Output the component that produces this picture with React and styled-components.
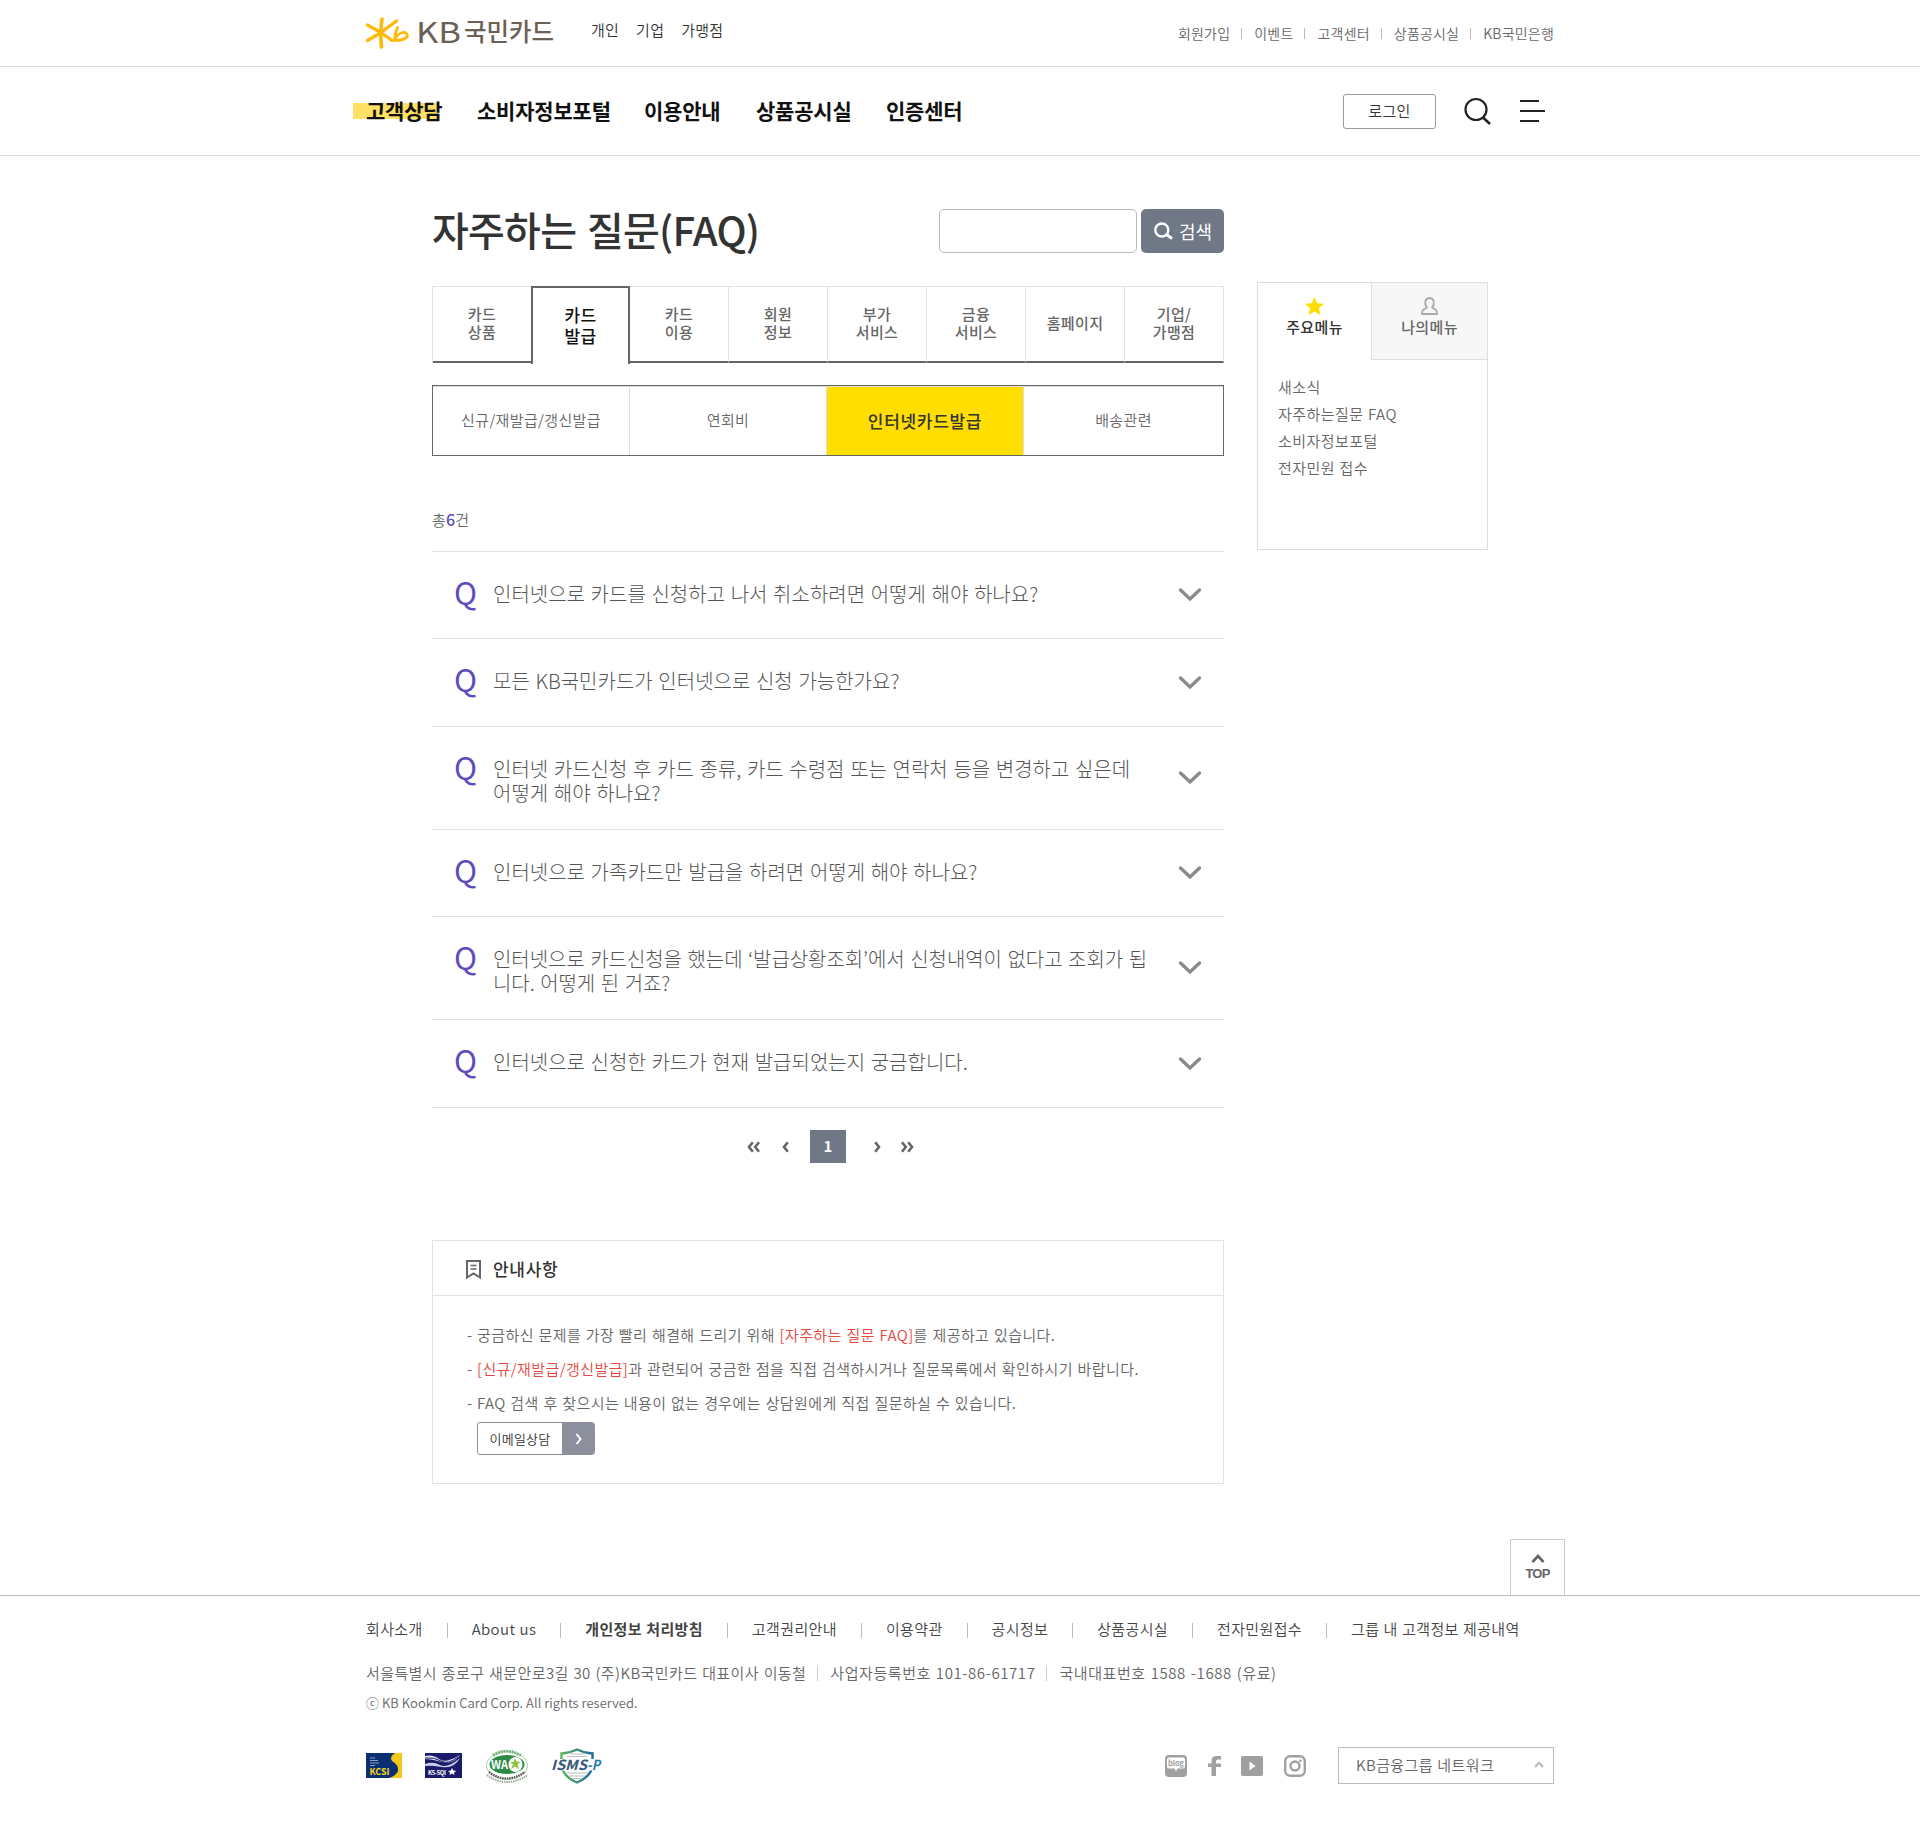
import React from "react";
import styled, { createGlobalStyle, css } from "styled-components";

const Global = createGlobalStyle`
  *, *::before, *::after { box-sizing: border-box; }
  body {
    margin: 0;
    background: #fff;
    color: #666;
    font-family: "Noto Sans CJK KR", "Noto Sans", sans-serif;
    font-size: 15px;
    font-weight: 350;
    line-height: 20px;
  }
  ul, h1, h2, p { margin: 0; padding: 0; list-style: none; font-weight: inherit; }
  a { color: inherit; text-decoration: none; white-space: nowrap; }
  button, input { font: inherit; color: inherit; }
  svg { display: block; flex: none; overflow: visible; }
`;

const Page = styled.div`
  height: 1828px;
  overflow: hidden;
`;

const Container = styled.div`
  width: 1188px;
  margin: 0 auto;
  display: flex;
  align-items: center;
`;

/* ---------- header ---------- */
const TopBar = styled.div`
  height: 67px;
  border-bottom: 1px solid #ddd;
`;
const TopInner = styled(Container)`
  height: 66px;
`;
const SiteLinks = styled.nav`
  display: flex;
  gap: 17px;
  margin: 0 auto 7px 37px;
  color: #333;
  letter-spacing: 0.25px;
`;
const UtilLinks = styled.ul`
  display: flex;
  align-items: center;
  font-size: 14px;
  letter-spacing: 0.2px;
`;
const UtilItem = styled.li`
  display: flex;
  align-items: center;
  &:not(:first-child)::before {
    content: "";
    width: 1px;
    height: 11px;
    margin: 0 12px 0 11px;
    background: #bbb;
  }
`;
const NavBar = styled.div`
  height: 89px;
  border-bottom: 1px solid #ddd;
`;
const NavInner = styled(Container)`
  height: 88px;
`;
const MainNav = styled.nav`
  display: flex;
  gap: 35px;
  margin: 0 auto 2px 0;
  font-size: 21px;
  font-weight: 700;
  line-height: 30px;
  color: #111;
`;
const NavLink = styled.a`
  display: block;
  width: ${(p) => p.$w}px;
  letter-spacing: -0.2px;
  ${(p) =>
    p.$on &&
    css`
      margin-left: -13px;
      padding-left: 13px;
      background: linear-gradient(#ffe066, #ffe066) 0 8px / 85px 16px no-repeat;
    `}
`;
const Login = styled.button`
  width: 93px;
  height: 35px;
  margin-right: 28px;
  padding: 0 0 1px;
  border: 1px solid #999;
  border-radius: 3px;
  background: #fff;
  color: #333;
  letter-spacing: 0.3px;
`;
const MenuIcon = styled.svg`
  margin: 0 9px 0 28px;
`;

/* ---------- content ---------- */
const Main = styled.main`
  width: 1056px;
  height: 1439px;
  margin: 0 auto;
  padding-top: 53px;
  display: flex;
  align-items: flex-start;
  gap: 33px;
`;
const Content = styled.section`
  width: 792px;
`;
const TitleRow = styled.div`
  height: 44px;
  display: flex;
  align-items: center;
`;
const Title = styled.h1`
  margin: 0 auto 5px 0;
  font-size: 40px;
  font-weight: 500;
  line-height: 44px;
  letter-spacing: -0.75px;
  word-spacing: 2.5px;
  color: #333;
`;
const SearchInput = styled.input`
  width: 198px;
  height: 44px;
  margin-right: 4px;
  border: 1px solid #bbb;
  border-radius: 5px;
`;
const SearchButton = styled.button`
  width: 83px;
  height: 44px;
  padding: 0 0 1px 13px;
  display: flex;
  align-items: center;
  gap: 6px;
  border: 0;
  border-radius: 5px;
  background: #707785;
  color: #fff;
  font-size: 18px;
  font-weight: 400;
`;
const Tabs = styled.ul`
  display: flex;
  height: 77px;
  margin-top: 33px;
  border-left: 1px solid #e2e2e2;
`;
const Tab = styled.li`
  flex: 0 0 99px;
  height: 77px;
  display: flex;
  align-items: center;
  justify-content: center;
  padding-bottom: 3px;
  border: solid #e2e2e2;
  border-width: 1px 1px 2px 0;
  border-bottom-color: #666;
  text-align: center;
  white-space: pre-line;
  font-weight: 500;
  line-height: 18px;
  letter-spacing: 0.35px;
  ${(p) =>
    p.$on &&
    css`
      height: 78px;
      margin-left: -1px;
      border: 2px solid #666;
      border-bottom: 0;
      color: #111;
      font-size: 17px;
      line-height: 21px;
    `}
`;
const SubTabs = styled.ul`
  display: flex;
  height: 71px;
  margin-top: 22px;
  border: 1px solid #666;
`;
const SubTab = styled.li`
  width: 197px;
  border-right: 1px solid #ddd;
  border-top: 1px solid #ddd;
  line-height: 65px;
  text-align: center;
  letter-spacing: 0.35px;
  &:last-child {
    flex: 1;
    border-right: 0;
  }
  ${(p) =>
    p.$on &&
    css`
      background: #ffde00;
      color: #333;
      font-size: 17px;
      font-weight: 500;
      line-height: 67px;
      letter-spacing: 0.7px;
    `}
`;
const Count = styled.p`
  margin: 53px 0 21px;
  letter-spacing: 0.2px;
  b {
    color: #5e4bbd;
    font-weight: 500;
    font-size: 16px;
  }
`;
const FaqList = styled.ul`
  border-top: 1px solid #e2e2e2;
`;
const FaqItem = styled.li`
  height: ${(p) => p.$h}px;
  padding: 0 22px;
  display: flex;
  align-items: center;
  border-bottom: 1px solid #e2e2e2;
`;
const Mark = styled.span`
  align-self: flex-start;
  width: 39px;
  padding-top: 25px;
  font-size: 31px;
  font-weight: 400;
  line-height: 30px;
  color: #5e4bbd;
`;
const Question = styled.p`
  align-self: flex-start;
  margin-right: auto;
  padding-top: 30px;
  font-size: 20px;
  font-weight: 300;
  line-height: 24px;
  letter-spacing: ${(p) => p.$ls || 0}px;
  word-spacing: 1.2px;
  white-space: pre;
  color: #555;
`;
const Paging = styled.nav`
  height: 33px;
  margin-top: 22px;
  padding-left: 315px;
  display: flex;
  align-items: center;
`;
const Current = styled.b`
  width: 36px;
  height: 33px;
  margin: 0 28px 0 21px;
  background: #707785;
  color: #fff;
  font-weight: 700;
  line-height: 32px;
  text-align: center;
`;
const Gap = styled.span`
  width: ${(p) => p.$w}px;
`;
const Notice = styled.section`
  height: 244px;
  margin-top: 77px;
  border: 1px solid #e2e2e2;
`;
const NoticeTitle = styled.h2`
  height: 55px;
  padding: 2px 0 0 33px;
  display: flex;
  align-items: center;
  gap: 12px;
  border-bottom: 1px solid #e2e2e2;
  font-size: 17px;
  font-weight: 500;
  color: #333;
  letter-spacing: 0.7px;
`;
const NoticeList = styled.ul`
  padding: 22px 0 0 34px;
  line-height: 34px;
`;
const NoticeItem = styled.li`
  display: flex;
  white-space: pre;
  letter-spacing: 0.41px;
  word-spacing: 0.9px;
  &::before {
    content: "-";
    width: 10px;
  }
  em {
    color: #e8483e;
    font-style: normal;
  }
`;
const MailButton = styled.button`
  width: 118px;
  height: 33px;
  margin: 2px 0 0 44px;
  padding: 0;
  display: flex;
  align-items: stretch;
  overflow: hidden;
  border: 1px solid #8b909c;
  border-radius: 3px;
  background: #fff;
  color: #333;
  font-size: 13px;
  line-height: 32px;
  letter-spacing: 0.2px;
`;
const MailLabel = styled.span`
  width: 84px;
  text-align: center;
`;
const MailArrow = styled.span`
  flex: 1;
  display: flex;
  align-items: center;
  justify-content: center;
  background: #8b909c;
`;

/* ---------- quick menu ---------- */
const Aside = styled.aside`
  width: 231px;
  height: 268px;
  margin-top: 73px;
  border: 1px solid #ddd;
`;
const AsideTabs = styled.div`
  display: flex;
`;
const AsideTab = styled.div`
  flex: 1;
  height: 77px;
  padding-top: 14px;
  display: flex;
  flex-direction: column;
  align-items: center;
  gap: 2px;
  font-weight: 500;
  letter-spacing: 0.35px;
  color: ${(p) => (p.$on ? "#333" : "#666")};
  ${(p) =>
    !p.$on &&
    css`
      flex: 0 0 116px;
      border: solid #ddd;
      border-width: 0 0 1px 1px;
      background: #f7f7f7;
    `}
`;
const AsideList = styled.ul`
  padding: 13px 20px;
  line-height: 27px;
  letter-spacing: 0.45px;
  word-spacing: 0.8px;
`;

/* ---------- footer ---------- */
const TopLinkRow = styled.div`
  position: relative;
  width: 1210px;
  margin: 0 auto;
`;
const TopLink = styled.a`
  position: absolute;
  right: 0;
  bottom: 0;
  width: 55px;
  height: 56px;
  padding-top: 14px;
  display: flex;
  flex-direction: column;
  align-items: center;
  gap: 1px;
  border: 1px solid #ccc;
  border-bottom: 0;
  font-family: "Liberation Sans", Arial, sans-serif;
  font-size: 13px;
  font-weight: 700;
  line-height: 19px;
  letter-spacing: -0.8px;
`;
const Footer = styled.footer`
  border-top: 1px solid #bbb;
  padding-top: 22px;
`;
const FooterNav = styled(Container)`
  height: 22px;
  color: #444;
  letter-spacing: 0.36px;
  word-spacing: 0.6px;
`;
const FooterLink = styled.a`
  display: flex;
  align-items: center;
  font-weight: ${(p) => (p.$bold ? 700 : 350)};
  &:not(:first-child)::before {
    content: "";
    width: 1px;
    height: 15px;
    margin: 2px 24px 0 24px;
    background: #bbb;
  }
`;
const Address = styled(Container)`
  height: 20px;
  margin-top: 23px;
  letter-spacing: 0.4px;
  word-spacing: 1px;
  span + span {
    display: flex;
    align-items: center;
    letter-spacing: 0.58px;
  }
  span + span::before {
    content: "";
    width: 1px;
    height: 15px;
    margin: 1px 12px 0 11px;
    background: #ccc;
  }
`;
const Copyright = styled(Container)`
  height: 20px;
  margin-top: 10px;
  font-size: 13px;
  letter-spacing: 0.04px;
`;
const FooterBottom = styled(Container)`
  height: 37px;
  margin-top: 34px;
`;
const Badges = styled.div`
  display: flex;
  align-items: center;
  margin-right: auto;
`;
const Social = styled.div`
  display: flex;
  align-items: center;
`;
const Network = styled.button`
  width: 216px;
  height: 37px;
  margin-left: 32px;
  padding: 0 9px 2px 17px;
  display: flex;
  align-items: center;
  justify-content: space-between;
  border: 1px solid #bbb;
  background: #fff;
  letter-spacing: 0.4px;
  word-spacing: 0.6px;
`;

/* ---------- drawings ---------- */
const Logo = () => (
  <svg width="188" height="36" viewBox="366 16 188 36">
    <g fill="none" stroke="#ffb90b" strokeLinecap="round" strokeLinejoin="round">
      <path d="M382 20 Q380 33 381.500 48" strokeWidth="3.600" />
      <path d="M367.500 26 L381 33.500 L392 41.500" strokeWidth="3.200" />
      <path d="M367.500 41.500 L381 33.500 Q389 27.500 396.500 22" strokeWidth="3.400" />
      <path d="M397.500 28.500 Q394.500 35.500 394.500 41.500 Q404 41.500 407.300 37.500 Q408 33 402.500 33.500 Q397 35 394.500 41" strokeWidth="2.800" />
    </g>
    <g fill="#6c6054" fontFamily="'Noto Sans CJK KR', sans-serif">
      <text x="416" y="43.500" fontSize="29" fontWeight="400" textLength="45" lengthAdjust="spacingAndGlyphs">KB</text>
      <text x="464" y="42" fontSize="25" fontWeight="500" textLength="90" lengthAdjust="spacingAndGlyphs">국민카드</text>
    </g>
  </svg>
);

const Chevron = () => (
  <svg width="24" height="14" viewBox="0 0 24 14">
    <path d="M2.500 2l9.500 9L21.500 2" fill="none" stroke="#8a8a8e" strokeWidth="3.400" strokeLinecap="round" />
  </svg>
);

const Arrows = ({ double, right }) => (
  <svg width={double ? 13 : 7} height="12" viewBox={double ? "0 0 13 12" : "0 0 7 12"}>
    <g
      fill="none"
      stroke="#666"
      strokeWidth="2.600"
      transform={right ? `translate(${double ? 13 : 7} 0) scale(-1 1)` : undefined}
    >
      <path d="M5.800 1.300L2 6l3.800 4.700" />
      {double && <path d="M12 1.300L8.200 6l3.800 4.700" />}
    </g>
  </svg>
);

const BadgeSvg = styled.svg`
  margin-left: ${(p) => p.$ml || 0}px;
`;

const Kcsi = () => (
  <BadgeSvg width="36" height="25" viewBox="0 0 36 25">
    <rect width="36" height="25" fill="#0b2f73" />
    <path d="M36 0H29Q23 4 26 8q7 4 6 10-2 5-9 7h13z" fill="#f4c81a" />
    <path d="M4 5h5M4 7.500h8M4 10h9M4 12.500h5" stroke="#8d9fc0" strokeWidth="1" />
    <text x="3.500" y="21.500" fontSize="9" fontWeight="700" fill="#f4d51a" textLength="20">KCSI</text>
  </BadgeSvg>
);
const Kssqi = () => (
  <BadgeSvg $ml={23} width="37" height="25" viewBox="0 0 37 25">
    <rect width="37" height="25" fill="#1b1b6b" />
    <path d="M0 3Q8 1 14 6T35 2Q28 12 17 9T0 6z" fill="#dfe3f2" />
    <path d="M0 11Q8 8 15 12T35 5Q29 16 17 14T0 13z" fill="#c9cfe8" />
    <path d="M0 5Q9 4 16 8T33 4" stroke="#1b1b6b" fill="none" />
    <path d="M27 15l1.300 2.500 3.200.5-2.500 1.400.5 2.600-2.500-1.500-2.500 1.500.5-2.600-2-1.400 2.800-.5z" fill="#fff" />
    <text x="3" y="21.500" fontSize="6" fontWeight="700" fill="#fff" textLength="18">KS-SQI</text>
  </BadgeSvg>
);
const WebAccess = () => (
  <BadgeSvg $ml={22} width="46" height="36" viewBox="0 0 46 36">
    <ellipse cx="23" cy="17.500" rx="20.500" ry="14" fill="#fff" stroke="#a9d0a5" strokeWidth="1" />
    <path d="M9 7.500Q22-1 37 7.500" fill="none" stroke="#76b57c" strokeWidth="3" strokeDasharray="2 .8" />
    <ellipse cx="23" cy="16.500" rx="17.500" ry="9.500" fill="#2b8d45" />
    <ellipse cx="31.500" cy="16.500" rx="7" ry="7.500" fill="#fff" />
    <path d="M31 10.500l1.500 2.800 4 1-3 2 1.500 5-4-3-4 3 2-5-3-1.500 3.500-1z" fill="#8cc63f" />
    <text x="7" y="21" fontSize="12" fontWeight="700" fill="#fff" textLength="17" lengthAdjust="spacingAndGlyphs">WA</text>
    <path d="M5 24Q22 37 41 24" fill="none" stroke="#555" strokeWidth="2.200" strokeDasharray="1.600 .8" />
    <path d="M3 27Q22 41 44 27" fill="none" stroke="#9aa59a" strokeWidth="1.800" strokeDasharray="1.500 .8" />
  </BadgeSvg>
);
const Isms = () => (
  <BadgeSvg $ml={22} width="50" height="36" viewBox="0 0 50 36">
    <defs>
      <linearGradient id="shield">
        <stop offset="0" stopColor="#5db45b" />
        <stop offset="1" stopColor="#1c6a9c" />
      </linearGradient>
    </defs>
    <path d="M25 1.500Q18 5 9.500 5.500V17Q10 28 25 34.500Q40 28 40.500 17V5.500Q32 5 25 1.500z" fill="#fff" stroke="url(#shield)" strokeWidth="2.400" />
    <path d="M15 8.500h20M18 6h14M14 25h22M17 28h16M21 30.500h8" stroke="#b9bfc2" strokeWidth="1.200" />
    <rect x="0" y="11" width="50" height="11.500" fill="#fff" />
    <text x="-1" y="22" fontSize="14" fontWeight="700" fontStyle="italic" fill="#36597a" textLength="36" lengthAdjust="spacingAndGlyphs">ISMS</text>
    <text x="35" y="22" fontSize="14" fontWeight="700" fontStyle="italic" fill="#1c78ac" textLength="13" lengthAdjust="spacingAndGlyphs">-P</text>
  </BadgeSvg>
);

/* ---------- data ---------- */
const utilities = ["회원가입", "이벤트", "고객센터", "상품공시실", "KB국민은행"];
const navigation = [
  { label: "고객상담", w: 89, on: true },
  { label: "소비자정보포털", w: 132 },
  { label: "이용안내", w: 77 },
  { label: "상품공시실", w: 95 },
  { label: "인증센터", w: 77 },
];
const tabs = ["카드\n상품", "카드\n발급", "카드\n이용", "회원\n정보", "부가\n서비스", "금융\n서비스", "홈페이지", "기업/\n가맹점"];
const subTabs = ["신규/재발급/갱신발급", "연회비", "인터넷카드발급", "배송관련"];
const questions = [
  { h: 87, text: "인터넷으로 카드를 신청하고 나서 취소하려면 어떻게 해야 하나요?" },
  { h: 88, text: "모든 KB국민카드가 인터넷으로 신청 가능한가요?" },
  { h: 103, text: "인터넷 카드신청 후 카드 종류, 카드 수령점 또는 연락처 등을 변경하고 싶은데\n어떻게 해야 하나요?" },
  { h: 87, text: "인터넷으로 가족카드만 발급을 하려면 어떻게 해야 하나요?" },
  {
    h: 103,
    ls: -0.06,
    text: "인터넷으로 카드신청을 했는데 ‘발급상황조회’에서 신청내역이 없다고 조회가 됩\n니다. 어떻게 된 거죠?",
  },
  { h: 88, text: "인터넷으로 신청한 카드가 현재 발급되었는지 궁금합니다." },
];
const footerLinks = ["회사소개", "About us", "개인정보 처리방침", "고객권리안내", "이용약관", "공시정보", "상품공시실", "전자민원접수", "그룹 내 고객정보 제공내역"];

export default function App() {
  return (
    <Page>
      <Global />
      <header>
        <TopBar>
          <TopInner>
            <Logo />
            <SiteLinks>
              <a>개인</a>
              <a>기업</a>
              <a>가맹점</a>
            </SiteLinks>
            <UtilLinks>
              {utilities.map((t) => (
                <UtilItem key={t}>
                  <a>{t}</a>
                </UtilItem>
              ))}
            </UtilLinks>
          </TopInner>
        </TopBar>
        <NavBar>
          <NavInner>
            <MainNav>
              {navigation.map((n) => (
                <NavLink key={n.label} $w={n.w} $on={n.on}>
                  {n.label}
                </NavLink>
              ))}
            </MainNav>
            <Login>로그인</Login>
            <svg width="28" height="28" viewBox="0 0 28 28" fill="none" stroke="#222" strokeWidth="2.200">
              <circle cx="12" cy="12.500" r="10.500" />
              <path d="M19 20.500l7 6.500" strokeWidth="2.600" />
            </svg>
            <MenuIcon width="25" height="24" viewBox="0 0 25 24" stroke="#222" strokeWidth="2.200">
              <path d="M0 2h19M0 12h25M0 22h19" />
            </MenuIcon>
          </NavInner>
        </NavBar>
      </header>

      <Main>
        <Content>
          <TitleRow>
            <Title>자주하는 질문(FAQ)</Title>
            <SearchInput aria-label="검색어" />
            <SearchButton>
              <svg width="19" height="18" viewBox="0 0 19 18" fill="none" stroke="#fff" strokeWidth="2.400">
                <circle cx="7.800" cy="8" r="6.500" />
                <path d="M12.500 12.500l5.500 4" strokeWidth="2.800" />
              </svg>
              검색
            </SearchButton>
          </TitleRow>
          <Tabs>
            {tabs.map((t, i) => (
              <Tab key={t} $on={i === 1}>
                {t}
              </Tab>
            ))}
          </Tabs>
          <SubTabs>
            {subTabs.map((t, i) => (
              <SubTab key={t} $on={i === 2}>
                {t}
              </SubTab>
            ))}
          </SubTabs>
          <Count>
            총<b>6</b>건
          </Count>
          <FaqList>
            {questions.map((q) => (
              <FaqItem key={q.text} $h={q.h}>
                <Mark>Q</Mark>
                <Question $ls={q.ls}>{q.text}</Question>
                <Chevron />
              </FaqItem>
            ))}
          </FaqList>
          <Paging>
            <Arrows double />
            <Gap $w={22} />
            <Arrows />
            <Current>1</Current>
            <Arrows right />
            <Gap $w={20} />
            <Arrows double right />
          </Paging>
          <Notice>
            <NoticeTitle>
              <svg width="15" height="19" viewBox="0 0 15 19" fill="none" stroke="#666" strokeWidth="2">
                <path d="M1 1h13v16.500l-6.500-4-6.500 4z" />
                <path d="M4.500 5.500h6M4.500 9h6" strokeWidth="1.500" />
              </svg>
              안내사항
            </NoticeTitle>
            <NoticeList>
              <NoticeItem>
                <p>
                  궁금하신 문제를 가장 빨리 해결해 드리기 위해 <em>[자주하는 질문 FAQ]</em>를 제공하고 있습니다.
                </p>
              </NoticeItem>
              <NoticeItem>
                <p>
                  <em>[신규/재발급/갱신발급]</em>과 관련되어 궁금한 점을 직접 검색하시거나 질문목록에서 확인하시기 바랍니다.
                </p>
              </NoticeItem>
              <NoticeItem>
                <p>FAQ 검색 후 찾으시는 내용이 없는 경우에는 상담원에게 직접 질문하실 수 있습니다.</p>
              </NoticeItem>
            </NoticeList>
            <MailButton>
              <MailLabel>이메일상담</MailLabel>
              <MailArrow>
                <svg width="8" height="12" viewBox="0 0 8 12">
                  <path d="M2.500 1l4 5-4 5" fill="none" stroke="#fff" strokeWidth="2" />
                </svg>
              </MailArrow>
            </MailButton>
          </Notice>
        </Content>

        <Aside>
          <AsideTabs>
            <AsideTab $on>
              <svg width="19" height="18" viewBox="0 0 19 18">
                <path d="M9.500 0l2.700 6.200 6.800.6-5.100 4.500 1.500 6.700-5.900-3.500-5.900 3.500 1.500-6.700L0 6.800l6.800-.6z" fill="#ffde00" />
              </svg>
              주요메뉴
            </AsideTab>
            <AsideTab>
              <svg width="17" height="18" viewBox="0 0 17 18" fill="none" stroke="#aaa" strokeWidth="1.800">
                <path d="M5.800 10.500C2.800 6.500 4 1 8.500 1s5.700 5.500 2.700 9.500l3.800 2.500q1 1.500 1 4H1q0-2.500 1-4z" />
              </svg>
              나의메뉴
            </AsideTab>
          </AsideTabs>
          <AsideList>
            <li>새소식</li>
            <li>자주하는질문 FAQ</li>
            <li>소비자정보포털</li>
            <li>전자민원 접수</li>
          </AsideList>
        </Aside>
      </Main>

      <TopLinkRow>
        <TopLink>
          <svg width="14" height="9" viewBox="0 0 14 9">
            <path d="M1.500 8L7 2l5.500 6" fill="none" stroke="#666" strokeWidth="2.600" />
          </svg>
          TOP
        </TopLink>
      </TopLinkRow>
      <Footer>
        <FooterNav>
          {footerLinks.map((t, i) => (
            <FooterLink key={t} $bold={i === 2}>
              {t}
            </FooterLink>
          ))}
        </FooterNav>
        <Address>
          <span>서울특별시 종로구 새문안로3길 30 (주)KB국민카드 대표이사 이동철</span>
          <span>사업자등록번호 101-86-61717</span>
          <span>국내대표번호 1588 -1688 (유료)</span>
        </Address>
        <Copyright>ⓒ KB Kookmin Card Corp. All rights reserved.</Copyright>
        <FooterBottom>
          <Badges>
            <Kcsi />
            <Kssqi />
            <WebAccess />
            <Isms />
          </Badges>
          <Social>
            <BadgeSvg width="22" height="22" viewBox="0 0 22 22">
              <rect width="22" height="22" rx="4" fill="#a0a0a0" />
              <path d="M4 2.500h14a2 2 0 0 1 2 2v7a2 2 0 0 1-2 2h-5l-2 2.500-2-2.500H4a2 2 0 0 1-2-2v-7a2 2 0 0 1 2-2z" fill="#fff" />
              <text x="3" y="10.800" fontSize="7.500" fontWeight="700" fill="#a0a0a0" textLength="16">blog</text>
            </BadgeSvg>
            <BadgeSvg $ml={21} width="13" height="20" viewBox="0 0 13 20">
              <path d="M3.500 20v-9H0V7.500h3.500V5q0-5 5-5H13v3.500h-3q-2 0-2 1.800v2.200h5V11H8v9z" fill="#a0a0a0" />
            </BadgeSvg>
            <BadgeSvg $ml={20} width="22" height="20" viewBox="0 0 22 20">
              <rect width="22" height="20" rx="2" fill="#a0a0a0" />
              <path d="M8.500 5.500l6 4.500-6 4.500z" fill="#fff" />
            </BadgeSvg>
            <BadgeSvg $ml={21} width="22" height="22" viewBox="0 0 22 22" fill="none" stroke="#a0a0a0">
              <rect x="1.200" y="1.200" width="19.600" height="19.600" rx="5" strokeWidth="2.400" />
              <circle cx="11" cy="11" r="4.500" strokeWidth="2.400" />
              <circle cx="16.300" cy="5.700" r="1.300" fill="#a0a0a0" stroke="none" />
            </BadgeSvg>
          </Social>
          <Network>
            KB금융그룹 네트워크
            <svg width="10" height="7" viewBox="0 0 10 7">
              <path d="M1 6l4-4.200L9 6" fill="none" stroke="#bbb" strokeWidth="2.200" />
            </svg>
          </Network>
        </FooterBottom>
      </Footer>
    </Page>
  );
}
